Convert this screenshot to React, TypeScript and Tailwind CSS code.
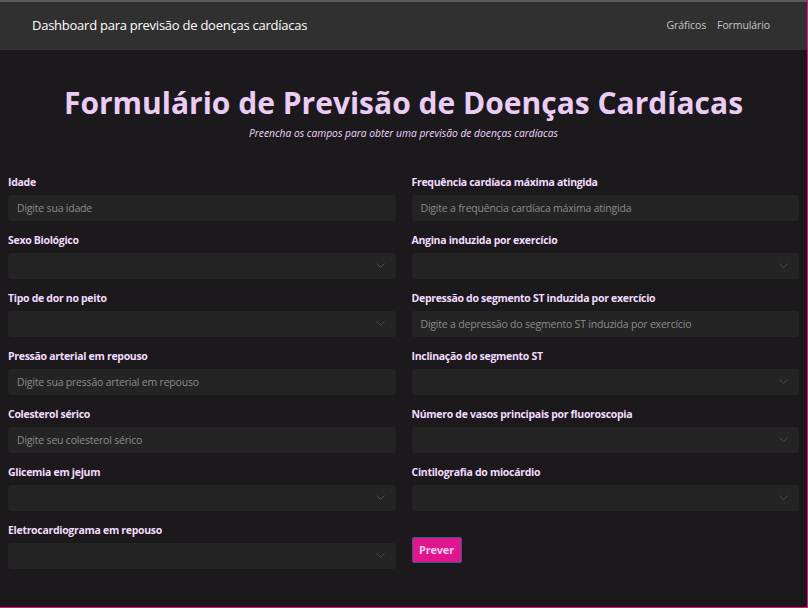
import React from 'react';

type Field = {
  label: string;
  placeholder?: string;
  select?: boolean;
};

const leftFields: Field[] = [
  { label: 'Idade', placeholder: 'Digite sua idade' },
  { label: 'Sexo Biológico', select: true },
  { label: 'Tipo de dor no peito', select: true },
  { label: 'Pressão arterial em repouso', placeholder: 'Digite sua pressão arterial em repouso' },
  { label: 'Colesterol sérico', placeholder: 'Digite seu colesterol sérico' },
  { label: 'Glicemia em jejum', select: true },
  { label: 'Eletrocardiograma em repouso', select: true },
];

const rightFields: Field[] = [
  { label: 'Frequência cardíaca máxima atingida', placeholder: 'Digite a frequência cardíaca máxima atingida' },
  { label: 'Angina induzida por exercício', select: true },
  { label: 'Depressão do segmento ST induzida por exercício', placeholder: 'Digite a depressão do segmento ST induzida por exercício' },
  { label: 'Inclinação do segmento ST', select: true },
  { label: 'Número de vasos principais por fluoroscopia', select: true },
  { label: 'Cintilografia do miocárdio', select: true },
];

function FormField({ field }: { field: Field }) {
  return (
    <div className="flex flex-col h-[58px]">
      <label className="text-[10.5px] font-bold tracking-[-0.3px] text-[#f3dcff] leading-[16px] mt-[9px] mb-[5px]">
        {field.label}
      </label>
      {field.select ? (
        <div className="relative h-[26px] rounded-[3px] bg-[#242424]">
          <svg
            className="absolute right-[11px] top-[10px] w-[9px] h-[6px] text-[#4a4a4a]"
            viewBox="0 0 9 6"
            fill="none"
            stroke="currentColor"
          >
            <path d="M0.5 0.5L4.5 4.5L8.5 0.5" strokeWidth={1} />
          </svg>
        </div>
      ) : (
        <input
          type="text"
          placeholder={field.placeholder}
          className="h-[26px] rounded-[3px] bg-[#242424] px-[9px] text-[10.5px] tracking-[-0.2px] text-gray-200 placeholder:text-[#8b8b8b] outline-none"
        />
      )}
    </div>
  );
}

export default function App() {
  return (
    <div className="w-[808px] h-[608px] overflow-hidden bg-[#1b191c] border-r border-b border-[#e0197a] font-['Open_Sans',sans-serif]">
      {/* Navbar */}
      <nav className="h-[50px] bg-[#303030] border-t-2 border-[#5a5a5a] flex items-center justify-between pl-[32px] pr-[37px]">
        <span className="text-[13px] tracking-[-0.25px] text-white">Dashboard para previsão de doenças cardíacas</span>
        <div className="flex gap-[11px] text-[10.5px] tracking-[-0.1px] text-[#c6c6c6]">
          <a href="#">Gráficos</a>
          <a href="#">Formulário</a>
        </div>
      </nav>

      {/* Header */}
      <header className="text-center pt-[32px]">
        <h1 className="text-[30px] font-bold leading-[42px] text-[#ebccf5]">
          Formulário de Previsão de Doenças Cardíacas
        </h1>
        <p className="text-[10.25px] italic text-[#f0d8ff] leading-[14px] mt-[2px]">
          Preencha os campos para obter uma previsão de doenças cardíacas
        </p>
      </header>

      {/* Form */}
      <form className="grid grid-cols-2 gap-x-4 px-2 pt-[25px]">
        <div className="flex flex-col">
          {leftFields.map((f) => (
            <FormField key={f.label} field={f} />
          ))}
        </div>
        <div className="flex flex-col">
          {rightFields.map((f) => (
            <FormField key={f.label} field={f} />
          ))}
          <div className="pt-[23px]">
            <button
              type="button"
              className="h-[26px] w-[50px] rounded-[2px] bg-[#e0168f] border border-[#3d5a80] text-[11px] font-bold tracking-[-0.2px] text-[#f7cdf0]"
            >
              Prever
            </button>
          </div>
        </div>
      </form>
    </div>
  );
}
